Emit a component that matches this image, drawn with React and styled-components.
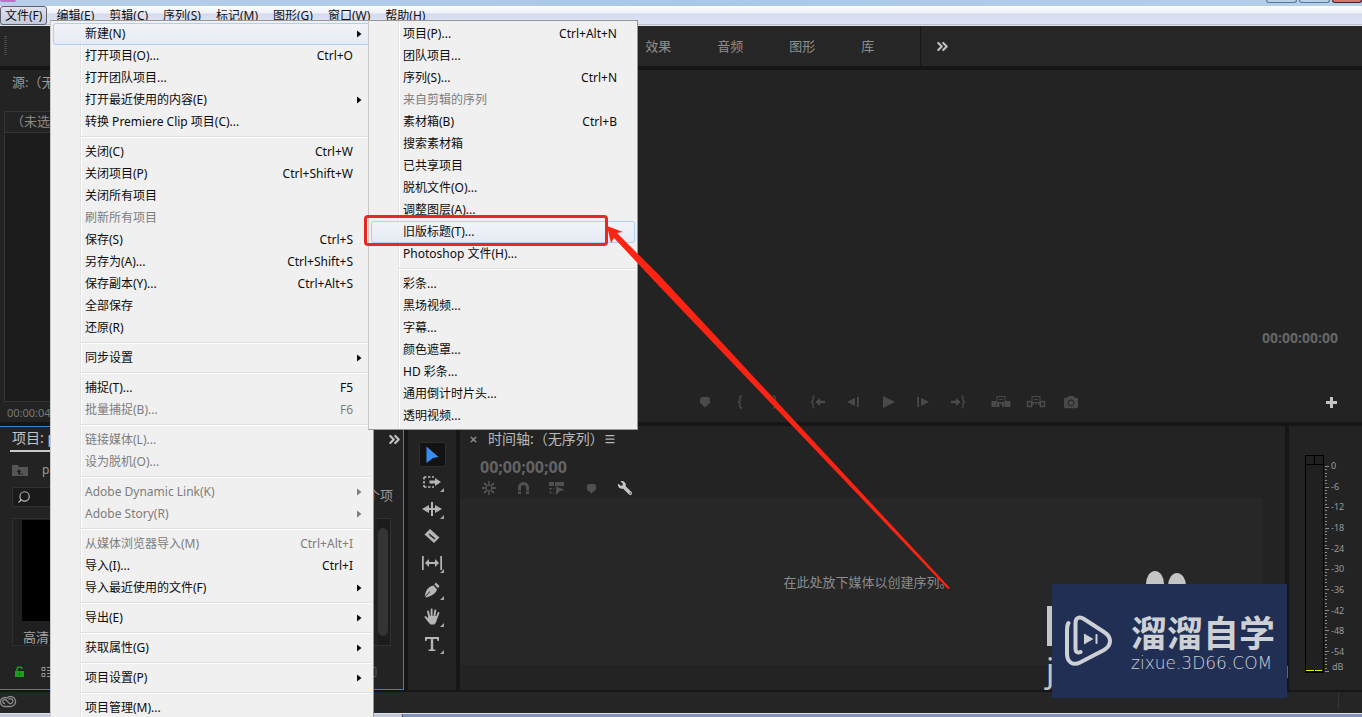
import React from "react";
import styled, { createGlobalStyle, css } from "styled-components";
import { ChevronsRight, Search, Menu as MenuIcon, X } from "lucide-react";
import { FaWrench, FaCamera } from "react-icons/fa";

const GlobalStyle = createGlobalStyle`
  * {
    box-sizing: border-box;
  }
  body {
    margin: 0;
    overflow: hidden;
    background: #161616;
    font-family: "Noto Sans", "Noto Sans CJK SC", sans-serif;
    font-size: 12px;
  }
  button {
    border: 0;
    padding: 0;
    background: none;
    color: inherit;
    font: inherit;
    text-align: left;
  }
`;

const Screen = styled.div`
  position: relative;
  display: flex;
  flex-direction: column;
  height: 100vh;
  overflow: hidden;
`;

/* Window frame */

const TitleBar = styled.header`
  display: flex;
  justify-content: space-between;
  height: 6px;
  flex: none;
  background: linear-gradient(to right, #b7cfe8, #a9c8e8 50%, #b4cfea);
`;

const AppBadge = styled.span`
  width: 16px;
  height: 2px;
  background: #c86ccb;
  border-radius: 0 0 2px 2px;
`;

const WindowButtons = styled.div`
  display: flex;
  gap: 2px;
  height: 3px;
`;

const WindowButton = styled.button`
  width: ${(p) => (p.$close ? 30 : 31)}px;
  border: 1px solid ${(p) => (p.$close ? "#4c1f26" : "#5a7694")};
  border-top: 0;
  border-radius: 0 0 3px 3px;
  background: ${(p) => (p.$close ? "#cf7770" : "#b5cfe8")};
`;

const MenuBar = styled.nav`
  display: flex;
  gap: 1px;
  height: 20px;
  flex: none;
  background: linear-gradient(#fdfdff, #eef1f9 35%, #d5dbee 40%, #dfe4f5 88%, #a9adba 90%, #f4f6fb);
`;

const MenuBarItem = styled.button`
  height: 19px;
  padding: 0 6px;
  border: 1px solid transparent;
  line-height: 17px;
  color: #111;
  white-space: nowrap;

  ${(p) =>
    p.$open &&
    css`
      padding: 0 4px;
      margin-right: 1px;
      border-color: #5c6272;
      border-radius: 3px;
      background: linear-gradient(#dfe2ec, #c4cadb);
    `}
`;

/* Popup menus */

const Popup = styled.div`
  position: absolute;
  left: ${(p) => p.$left}px;
  top: 20px;
  width: ${(p) => p.$width}px;
  padding: 2px 0;
  border: 1px solid #979797;
  border-left-color: #c8c8c8;
  background: linear-gradient(to right, #f0f0f0 29px, #e2e3e3 29px, #e2e3e3 30px, #fff 30px, #fff 31px, #f0f0f0 31px);
`;

const Item = styled.button`
  display: flex;
  align-items: center;
  width: calc(100% - 4px);
  height: 22px;
  margin: 0 2px;
  padding: 0 8px 0 31px;
  border: 1px solid transparent;
  border-radius: 3px;
  color: ${(p) => (p.disabled ? "#7d7d7d" : "#0c0c0c")};
  line-height: 20px;
  white-space: nowrap;

  ${(p) =>
    p.$active &&
    css`
      border-color: #aecff7;
      background: linear-gradient(rgba(241, 244, 249, 0.8), rgba(226, 234, 246, 0.8));
    `}
`;

const ItemLabel = styled.span`
  flex: 1;
`;

const Shortcut = styled.span`
  margin-right: 9px;
`;

const SubArrow = styled.svg`
  width: 5px;
  height: 8px;
  fill: currentColor;
`;

const Separator = styled.hr`
  height: 2px;
  margin: 3px 1px 3px 29px;
  border: 0;
  border-top: 1px solid #e0e0e0;
  background: #fff;
`;

/* Workspace */

const WorkspaceBar = styled.div`
  display: grid;
  grid-template-columns: 9fr 10fr;
  align-items: center;
  height: 40px;
  flex: none;
  margin-bottom: 4px;
  background: #262626;
  color: #8f8f8f;
`;

const Grip = styled.span`
  width: 3px;
  height: 20px;
  margin-left: 4px;
  background: repeating-linear-gradient(#484848 0 1px, transparent 1px 2px);
`;

const WorkspaceTabs = styled.div`
  display: flex;
  align-self: stretch;
  align-items: center;
  gap: 46px;
  font-size: 13px;
  line-height: 18px;
`;

const WorkspaceMore = styled.button`
  display: flex;
  align-items: center;
  align-self: stretch;
  padding-left: 13px;
  border-left: 1px solid #161616;
  color: #c2c2c2;
`;

const Monitors = styled.div`
  display: grid;
  grid-template-columns: 410px 1fr;
  gap: 4px;
  flex: 1;
  min-height: 0;
  margin-bottom: 4px;
`;

const Panel = styled.section`
  display: flex;
  flex-direction: column;
  min-width: 0;
  min-height: 0;
  background: #232323;
  color: #9a9a9a;
`;

const SourceTitle = styled.div`
  flex: none;
  height: 41px;
  padding: 3px 12px;
  font-size: 13px;
  line-height: 18px;
`;

const SourceBox = styled.div`
  flex: 1;
  margin: 0 4px;
  border: 1px solid #353535;
  background: #1c1c1c;
`;

const SourceClip = styled.div`
  height: 21px;
  padding-left: 6px;
  border-bottom: 1px solid #353535;
  background: #232323;
  font-size: 13px;
  line-height: 19px;
  color: #888;
`;

const SourceTime = styled.div`
  height: 20px;
  padding-left: 7px;
  font-size: 11px;
  line-height: 22px;
  color: #777;
`;

const Viewport = styled.div`
  flex: 1;
`;

const ProgramTime = styled.div`
  padding-right: 24px;
  margin-bottom: 34px;
  font: 700 14px/20px "Open Sans", sans-serif;
  text-align: right;
  color: #666;
`;

const Transport = styled.div`
  display: grid;
  grid-template-columns: 1fr auto 1fr;
  align-items: center;
  height: 40px;
  color: #4a4a4a;
`;

const TransportGroups = styled.div`
  display: flex;
  gap: 8px;
  grid-column: 2;
`;

const Group = styled.div`
  display: flex;
`;

const IconButton = styled.button`
  display: flex;
  align-items: center;
  justify-content: center;
  width: ${(p) => p.$width || 35}px;
  height: 24px;
`;

const AddButton = styled.button`
  display: flex;
  justify-self: end;
  margin-right: 25px;
  color: #c4c4c4;
`;

const Lower = styled.div`
  display: grid;
  grid-template-columns: 404px 48px 1fr 73px;
  gap: 4px;
  height: 264px;
  flex: none;
`;

const ProjectPanel = styled(Panel)`
  border: 1px solid #3a80cc;
  border-left: 0;
`;

const ProjectHeader = styled.div`
  display: flex;
  align-items: center;
  justify-content: space-between;
  height: 25px;
  padding: 0 0 0 10px;
  color: #c4c4c4;
`;

const ProjectTab = styled.h2`
  height: 25px;
  margin: 0;
  padding: 0 2px;
  border-bottom: 2px solid #c9c9c9;
  font-size: 14px;
  font-weight: 400;
  line-height: 22px;
`;

const ProjectPath = styled.div`
  display: flex;
  align-items: center;
  gap: 14px;
  height: 35px;
  padding-left: 12px;
`;

const SearchRow = styled.div`
  display: flex;
  align-items: center;
  justify-content: space-between;
  height: 20px;
  padding: 0 10px 0 12px;
  font-size: 13px;
  line-height: 16px;
`;

const SearchBox = styled.label`
  display: flex;
  align-items: center;
  width: 200px;
  height: 20px;
  padding-left: 4px;
  border: 1px solid #303030;
  border-radius: 2px;
  background: #1a1a1a;
  color: #b5b5b5;

  input {
    width: 160px;
    border: 0;
    outline: 0;
    background: none;
    color: inherit;
  }
`;

const ItemCount = styled.span`
  padding-bottom: 4px;
`;

const Bin = styled.div`
  display: flex;
  justify-content: space-between;
  height: 128px;
  margin: 11px 12px 0;
  border: 1px solid #303030;
  background: #202020;
`;

const Clip = styled.figure`
  margin: 1px 9px 0;
  font-size: 13px;
`;

const Thumb = styled.div`
  width: 160px;
  height: 101px;
  background: #000;
`;

const ClipName = styled.figcaption`
  padding: 8px 0 0 1px;
  line-height: 16px;
  color: #a5a5a5;
`;

const ScrollTrack = styled.div`
  width: 12px;
  padding: 9px 0;
  background: #1c1c1c;
`;

const ScrollThumb = styled.div`
  width: 10px;
  height: 108px;
  border-radius: 5px;
  background: #343434;
`;

const ProjectFooter = styled.div`
  display: flex;
  flex: 1;
  align-items: center;
  gap: 16px;
  padding: 8px 26px 0 14px;
`;

const Spacer = styled.span`
  flex: 1;
`;

const Tools = styled(Panel)`
  align-items: center;
  padding-top: 15px;
  color: #b5b5b5;
`;

const Tool = styled.button`
  position: relative;
  display: flex;
  align-items: center;
  justify-content: center;
  width: 27px;
  height: 25px;
  margin: 1px 0;
  border-radius: 2px;
  ${(p) =>
    p.$active &&
    css`
      border: 1px solid #2e2e2e;
      background: #131313;
      color: #3a8df0;
    `}
`;

const ToolCorner = styled.span`
  position: absolute;
  right: 2px;
  bottom: 2px;
  border: 2px solid transparent;
  border-right-color: #a5a5a5;
  border-bottom-color: #a5a5a5;
`;

const TimelineHeader = styled.div`
  display: flex;
  align-items: center;
  height: 26px;
  padding-left: 9px;
  color: #b9b9b9;

  h2 {
    margin: 0;
    padding-left: 10px;
    font-size: 14px;
    font-weight: 400;
    line-height: 20px;
  }
`;

const TimelineTime = styled.div`
  height: 26px;
  padding: 4px 0 0 20px;
  font: 700 16px/22px "Open Sans", sans-serif;
  color: #636363;
`;

const TimelineTools = styled.div`
  display: flex;
  align-items: center;
  height: 20px;
  padding-left: 12px;
  color: #505050;
`;

const DropZone = styled.div`
  display: flex;
  align-items: center;
  justify-content: center;
  height: 167px;
  margin-right: 23px;
  padding-left: 14px;
  background: #272727;
  font-size: 13px;
  color: #8c8c8c;
`;

const MeterPanel = styled(Panel)`
  flex-direction: row;
  padding: 29px 0 0 16px;
`;

const MeterBars = styled.div`
  display: grid;
  grid-template-columns: 1fr 1fr;
  width: 19px;
  height: 218px;
  border: 1px solid #000;
  background: #202020;
`;

const MeterChannel = styled.div`
  display: flex;
  flex-direction: column;
  justify-content: space-between;
  border-bottom: 1px solid #000;
`;

const MeterClip = styled.span`
  height: 9px;
  border-bottom: 1px solid #000;
  border-right: ${(p) => (p.$first ? "1px solid #000" : 0)};
`;

const MeterLevel = styled.span`
  height: 1px;
  margin-right: 1px;
  background: #f0f000;
`;

const MeterScale = styled.ol`
  display: flex;
  flex-direction: column;
  justify-content: space-between;
  height: 198px;
  margin: 5px 0 0;
  padding: 0;
  list-style: none;
  font-size: 9px;
  line-height: 12px;
`;

const MeterUnit = styled.div`
  padding: 2px 0 0 1px;
  font-size: 9px;
  line-height: 14px;
`;

const StatusBar = styled.footer`
  display: flex;
  align-items: center;
  justify-content: space-between;
  height: 21px;
  flex: none;
  margin-top: 2px;
  padding-bottom: 4px;
  background: #252525;
`;

const StatusEnd = styled.span`
  align-self: stretch;
  width: 24px;
  border-left: 1px solid #343434;
`;

const TaskBar = styled.div`
  display: flex;
  height: 4px;
  flex: none;
  border-top: 1px solid #dfe4ee;
  background: #8394b8;
`;

const TaskButton = styled.span`
  width: 403px;
  border-right: 1px solid #3c4454;
  border-radius: 0 2px 0 0;
  background: #c3cbd9;
`;

/* Things drawn on top of the window */

const HighlightBox = styled.div`
  position: absolute;
  left: 364px;
  top: 215px;
  width: 244px;
  height: 31px;
  border: 3px solid #e62a20;
  border-radius: 4px;
`;

const ArrowLayer = styled.svg`
  position: absolute;
  left: 600px;
  top: 220px;
  pointer-events: none;
`;

const PawLayer = styled.div`
  position: absolute;
  right: 74px;
  bottom: 19px;
  width: 244px;
  height: 127px;
  color: #c5c5c5;
`;

const PawShapes = styled.svg`
  display: block;
`;

const PawLetter = styled.span`
  position: absolute;
  left: 2px;
  bottom: 8px;
  font: 32px/40px "Noto Sans", sans-serif;
`;

const Watermark = styled.div`
  position: absolute;
  right: 75px;
  bottom: 19px;
  display: flex;
  align-items: center;
  gap: 18px;
  width: 235px;
  height: 114px;
  padding-left: 13px;
  background: #222f54;
  color: #cdd0d4;
`;

const BrandName = styled.div`
  font: 700 36px/44px "Noto Sans CJK SC", sans-serif;
  white-space: nowrap;
`;

const BrandSite = styled.div`
  font: 200 17px/20px "DejaVu Sans", sans-serif;
  white-space: nowrap;
`;

const menuBar = ["文件(F)", "编辑(E)", "剪辑(C)", "序列(S)", "标记(M)", "图形(G)", "窗口(W)", "帮助(H)"];

const fileMenu = [
  { label: "新建(N)", sub: true, active: true },
  { label: "打开项目(O)...", keys: "Ctrl+O" },
  { label: "打开团队项目..." },
  { label: "打开最近使用的内容(E)", sub: true },
  { label: "转换 Premiere Clip 项目(C)..." },
  null,
  { label: "关闭(C)", keys: "Ctrl+W" },
  { label: "关闭项目(P)", keys: "Ctrl+Shift+W" },
  { label: "关闭所有项目" },
  { label: "刷新所有项目", disabled: true },
  { label: "保存(S)", keys: "Ctrl+S" },
  { label: "另存为(A)...", keys: "Ctrl+Shift+S" },
  { label: "保存副本(Y)...", keys: "Ctrl+Alt+S" },
  { label: "全部保存" },
  { label: "还原(R)" },
  null,
  { label: "同步设置", sub: true },
  null,
  { label: "捕捉(T)...", keys: "F5" },
  { label: "批量捕捉(B)...", keys: "F6", disabled: true },
  null,
  { label: "链接媒体(L)...", disabled: true },
  { label: "设为脱机(O)...", disabled: true },
  null,
  { label: "Adobe Dynamic Link(K)", sub: true, disabled: true },
  { label: "Adobe Story(R)", sub: true, disabled: true },
  null,
  { label: "从媒体浏览器导入(M)", keys: "Ctrl+Alt+I", disabled: true },
  { label: "导入(I)...", keys: "Ctrl+I" },
  { label: "导入最近使用的文件(F)", sub: true },
  null,
  { label: "导出(E)", sub: true },
  null,
  { label: "获取属性(G)", sub: true },
  null,
  { label: "项目设置(P)", sub: true },
  null,
  { label: "项目管理(M)..." },
];

const newMenu = [
  { label: "项目(P)...", keys: "Ctrl+Alt+N" },
  { label: "团队项目..." },
  { label: "序列(S)...", keys: "Ctrl+N" },
  { label: "来自剪辑的序列", disabled: true },
  { label: "素材箱(B)", keys: "Ctrl+B" },
  { label: "搜索素材箱" },
  { label: "已共享项目" },
  { label: "脱机文件(O)..." },
  { label: "调整图层(A)..." },
  { label: "旧版标题(T)...", active: true },
  { label: "Photoshop 文件(H)..." },
  null,
  { label: "彩条..." },
  { label: "黑场视频..." },
  { label: "字幕..." },
  { label: "颜色遮罩..." },
  { label: "HD 彩条..." },
  { label: "通用倒计时片头..." },
  { label: "透明视频..." },
];

const workspaces = ["效果", "音频", "图形", "库"];

const meterMarks = ["0", "-6", "-12", "-18", "-24", "-30", "-36", "-42", "-48", "-54"];

const MenuList = ({ items, left, width }) => (
  <Popup role="menu" $left={left} $width={width}>
    {items.map((item, i) =>
      item ? (
        <Item key={i} role="menuitem" $active={item.active} disabled={item.disabled}>
          <ItemLabel>{item.label}</ItemLabel>
          {item.keys && <Shortcut>{item.keys}</Shortcut>}
          {item.sub && (
            <SubArrow viewBox="0 0 5 8">
              <path d="M0 0.5 4.5 4 0 7.5z" />
            </SubArrow>
          )}
        </Item>
      ) : (
        <Separator key={i} />
      )
    )}
  </Popup>
);

const Icon = ({ w = 18, h = 18, children, ...rest }) => (
  <svg width={w} height={h} viewBox={`0 0 ${w} ${h}`} fill="currentColor" aria-hidden="true" {...rest}>
    {children}
  </svg>
);

const Marker = ({ size = 12 }) => (
  <svg width={size} height={size} viewBox="0 0 12 12" fill="currentColor">
    <path d="M1 2.5 2.5 1h7L11 2.5V7L6 11.5 1 7z" />
  </svg>
);

const Brace = ({ flip }) => (
  <Icon w={6} h={14}>
    <path
      d="M5 1H4.2Q3 1 3 2.5v3L1.5 7 3 8.5v3Q3 13 4.2 13H5"
      fill="none"
      stroke="currentColor"
      strokeWidth="1.5"
      transform={flip ? "translate(6 0) scale(-1 1)" : undefined}
    />
  </Icon>
);

const GoTo = ({ flip }) => (
  <Icon w={16} h={14}>
    <g transform={flip ? "translate(16 0) scale(-1 1)" : undefined}>
      <path d="M4.5 1Q3 1 3 2.5v3L1.5 7 3 8.5v3Q3 13 4.5 13" fill="none" stroke="currentColor" strokeWidth="1.3" />
      <path d="M5.5 7l4.500-4v2.700h5v2.600h-5V11z" />
    </g>
  </Icon>
);

const Step = ({ flip }) => (
  <Icon w={14} h={12}>
    <g transform={flip ? "translate(14 0) scale(-1 1)" : undefined}>
      <path d="M1 6 9 2v8zM11 1h1.700v10H11z" />
    </g>
  </Icon>
);

const Lift = ({ hollow }) => (
  <Icon w={20} h={14}>
    <path d="M6 1.500h8v6H6z" fill="none" stroke="currentColor" />
    <path d="M8 4h4v1H8zM9.500 7.500h1V10h-1z" />
    {hollow ? (
      <path d="M1.500 6.500h4v5h-4zM14.500 6.500h4v5h-4zM6 9h2M12 9h2" fill="none" stroke="currentColor" strokeWidth="1.500" />
    ) : (
      <path d="M.5 6h5v6h-5zM14 6h5.500v6H14zM6 8h2.500v4H6zM11 8h2.500v4H11z" />
    )}
  </Icon>
);

const ToolIcons = [
  <Icon w={14} h={18} key="select">
    <path d="M1.500 0.500 13.500 11 8 12 1.500 17z" />
  </Icon>,
  <Icon w={18} h={14} key="track">
    <path d="M1 2h10M1 12h10M1 2v10" fill="none" stroke="currentColor" strokeWidth="1.600" strokeDasharray="2.500 1.500" />
    <path d="M6.500 5.500H12V3l6 4-6 4V8.500H6.500z" />
  </Icon>,
  <Icon w={20} h={14} key="ripple">
    <path d="M9 0h2v14H9zM0 7l7-4v3h6V3l7 4-7 4V8H7v3z" />
  </Icon>,
  <Icon w={16} h={16} key="razor">
    <path d="M6 1 15.500 9.500 10 15 .5 6.500z" />
    <path d="M5 6l6 5M6.500 8.500l1-1M8.500 10l1-1" stroke="#232323" strokeWidth="1.300" />
  </Icon>,
  <Icon w={20} h={16} key="slip">
    <path d="M0 1h1.700v14H0zM18.300 1H20v14h-1.700zM3 8l4-4v3h6V4l4 4-4 4V9H7v3z" />
  </Icon>,
  <Icon w={16} h={16} key="pen">
    <path d="M9.500 3.500l3.500 4c-1 3.500-4 6-11 8l-.7-.5 5-5.200-.5-.6-5 5.200C1.500 9 4 4.500 9.500 3.500zM10.500 2.500 12 .5 15.500 4 14 6.200z" />
  </Icon>,
  <Icon w={16} h={18} key="hand">
    <path d="M5.300 9 4 3.500M7.600 8V1.500M10.300 8.500l1-6M12.500 10l2-5M5 13.500 1.500 9" fill="none" stroke="currentColor" strokeWidth="1.900" strokeLinecap="round" />
    <path d="M4.500 8h8.700c0 4-.7 6-2.700 8.500H6.500C5 15 3.500 13 3 11z" />
  </Icon>,
  <Icon w={16} h={16} key="type">
    <path d="M1 1h14v4h-1.500L13 3H9.200v10.300l2.300.5V15h-7v-1.200l2.300-.5V3H3l-.5 2H1z" />
  </Icon>,
];

const toolNames = ["选择", "向前选择轨道", "波纹编辑", "剃刀", "外滑", "钢笔", "手形", "文字"];

const SourceMonitor = () => (
  <Panel>
    <SourceTitle>源:（无</SourceTitle>
    <SourceBox>
      <SourceClip>（未选</SourceClip>
    </SourceBox>
    <SourceTime>00:00:04</SourceTime>
  </Panel>
);

const ProgramMonitor = () => (
  <Panel>
    <Viewport />
    <ProgramTime>00:00:00:00</ProgramTime>
    <Transport>
      <TransportGroups>
        <Group>
          <IconButton aria-label="添加标记"><Marker /></IconButton>
          <IconButton aria-label="标记入点"><Brace /></IconButton>
          <IconButton aria-label="标记出点"><Brace flip /></IconButton>
        </Group>
        <Group>
          <IconButton aria-label="转到入点"><GoTo /></IconButton>
          <IconButton aria-label="后退一帧"><Step /></IconButton>
          <IconButton aria-label="播放">
            <Icon w={13} h={14}><path d="M1 1 13 7 1 13z" /></Icon>
          </IconButton>
          <IconButton aria-label="前进一帧"><Step flip /></IconButton>
          <IconButton aria-label="转到出点"><GoTo flip /></IconButton>
        </Group>
        <Group>
          <IconButton aria-label="提升"><Lift /></IconButton>
          <IconButton aria-label="提取"><Lift hollow /></IconButton>
          <IconButton aria-label="导出帧"><FaCamera size={14} /></IconButton>
        </Group>
      </TransportGroups>
      <AddButton aria-label="按钮编辑器">
        <Icon w={11} h={11}><path d="M4 0h3v4h4v3H7v4H4V7H0V4h4z" /></Icon>
      </AddButton>
    </Transport>
  </Panel>
);

const Project = () => (
  <ProjectPanel>
    <ProjectHeader>
      <ProjectTab>项目: ps</ProjectTab>
      <ChevronsRight size={17} strokeWidth={3} />
    </ProjectHeader>
    <ProjectPath>
      <Icon w={16} h={12}>
        <path d="M0 1h6l1 2h9v9H0z" fill="#555" />
        <path d="M7 5 4.500 8H6v2.500h5V9.500H8V8h1.500z" fill="#232323" />
      </Icon>
      ps
    </ProjectPath>
    <SearchRow>
      <SearchBox>
        <Search size={14} transform="scale(-1 1)" />
        <input aria-label="搜索" />
      </SearchBox>
      <ItemCount>个项</ItemCount>
    </SearchRow>
    <Bin>
      <Clip>
        <Thumb />
        <ClipName>高清</ClipName>
      </Clip>
      <ScrollTrack>
        <ScrollThumb />
      </ScrollTrack>
    </Bin>
    <ProjectFooter>
      <Icon w={11} h={12}>
        <path d="M1 5h9v6H1z" fill="#18a018" />
        <path d="M3 5V3.500Q3 1 5.500 1T8 3" fill="none" stroke="#18a018" strokeWidth="1.500" />
        <path d="M5 7h1v2H5z" fill="#123512" />
      </Icon>
      <Icon w={14} h={12}>
        <path d="M1 1.500h3v3H1zM1 7.500h3v3H1z" fill="none" stroke="currentColor" />
        <path d="M6 1h8v1H6zM6 4h8v1H6zM6 7h8v1H6zM6 10h8v1H6z" />
      </Icon>
      <Spacer />
      <Icon w={10} h={12}><path d="M1 1.500h8v9H1z" fill="none" stroke="#555" /></Icon>
    </ProjectFooter>
  </ProjectPanel>
);

const Timeline = () => (
  <Panel>
    <TimelineHeader>
      <X size={9} strokeWidth={4} color="#8a8a8a" />
      <h2>时间轴:（无序列）</h2>
      <MenuIcon size={12} strokeWidth={2.5} />
    </TimelineHeader>
    <TimelineTime>00;00;00;00</TimelineTime>
    <TimelineTools>
      <IconButton $width={34} aria-label="嵌套">
        <Icon w={16} h={14}>
          <path d="M8 0v5M8 9v5M1 7h5M10 7h5M3 2l3.500 3.500M13 2 9.500 5.500M3 12l3.500-3.500M9.500 8.500 13 12" stroke="currentColor" strokeWidth="1.800" />
        </Icon>
      </IconButton>
      <IconButton $width={34} aria-label="对齐">
        <Icon w={13} h={12}>
          <path d="M2.500 12V5.500a4 4 0 0 1 8 0V12" fill="none" stroke="currentColor" strokeWidth="3" />
          <path d="M0 9h5M8 9h5" stroke="#232323" />
        </Icon>
      </IconButton>
      <IconButton $width={34} aria-label="链接选择项">
        <Icon w={16} h={14}>
          <path d="M0 1h5v4H0zM6 1h9v4H6zM6 5l10 4-5 1-4 4V5z" />
          <path d="M1 7.500h4M1 12h4M1 7v5" fill="none" stroke="currentColor" strokeDasharray="2 1" />
        </Icon>
      </IconButton>
      <IconButton $width={34} aria-label="标记"><Marker size={11} /></IconButton>
      <IconButton $width={34} aria-label="设置">
        <FaWrench size={14} color="#c4c4c4" transform="scale(-1 1)" />
      </IconButton>
    </TimelineTools>
    <DropZone>在此处放下媒体以创建序列。</DropZone>
  </Panel>
);

const Meters = () => (
  <MeterPanel>
    <MeterBars>
      {[0, 1].map((n) => (
        <MeterChannel key={n}>
          <MeterClip $first={n === 0} />
          <MeterLevel />
        </MeterChannel>
      ))}
    </MeterBars>
    <Icon w={7} h={218}>
      {Array.from({ length: 61 }, (_, i) => (
        <rect key={i} x="1" y={Math.round(11 + i * 3.42)} width={i % 6 ? 2 : 4} height="1" fill="#8a8a8a" />
      ))}
    </Icon>
    <div>
      <MeterScale>
        {meterMarks.map((mark) => (
          <li key={mark}>{mark}</li>
        ))}
      </MeterScale>
      <MeterUnit>dB</MeterUnit>
    </div>
  </MeterPanel>
);

const Brand = () => (
  <>
    <PawLayer>
      <PawShapes width="244" height="127" viewBox="0 0 244 127" fill="#c5c5c5">
        <ellipse cx="111" cy="13" rx="9" ry="13" />
        <ellipse cx="133" cy="15" rx="9" ry="13" />
        <path d="M3 35h6v40H3z" />
        <path d="M243 95h1v12h-1z" fill="#666" />
      </PawShapes>
      <PawLetter>j</PawLetter>
    </PawLayer>
    <Watermark>
      <svg width="48" height="52" viewBox="0 0 48 52" fill="none" stroke="#cdd0d4" strokeLinecap="round">
        <path d="M3.500 8C2 10 2 12 2 15v24c0 8 6 12 13 8.500L39 35c8-5 8-13 0-18L19 4c-5-3-8.500-1-8.500 4v26c0 3 2 4.500 5 3" strokeWidth="4" />
        <path d="M19 18.500 28.500 24 19 29.500z" fill="#cdd0d4" stroke="none" />
        <path d="M31.500 20v8" strokeWidth="2" />
      </svg>
      <div>
        <BrandName>溜溜自学</BrandName>
        <BrandSite>zixue.3D66.COM</BrandSite>
      </div>
    </Watermark>
  </>
);

const App = () => {
  return (
    <Screen>
      <GlobalStyle />
      <TitleBar>
        <AppBadge />
        <WindowButtons>
          <WindowButton aria-label="最小化" />
          <WindowButton aria-label="最大化" />
          <WindowButton aria-label="关闭" $close />
        </WindowButtons>
      </TitleBar>
      <MenuBar>
        {menuBar.map((name, i) => (
          <MenuBarItem key={name} $open={i === 0}>
            {name}
          </MenuBarItem>
        ))}
      </MenuBar>
      <WorkspaceBar>
        <Grip />
        <WorkspaceTabs>
          {workspaces.map((name) => (
            <button key={name}>{name}</button>
          ))}
          <WorkspaceMore aria-label="更多">
            <ChevronsRight size={17} strokeWidth={3} />
          </WorkspaceMore>
        </WorkspaceTabs>
      </WorkspaceBar>
      <Monitors>
        <SourceMonitor />
        <ProgramMonitor />
      </Monitors>
      <Lower>
        <Project />
        <Tools>
          {ToolIcons.map((icon, i) => (
            <Tool key={toolNames[i]} $active={i === 0} aria-label={toolNames[i]}>
              {icon}
              {i !== 0 && i !== 3 && <ToolCorner />}
            </Tool>
          ))}
        </Tools>
        <Timeline />
        <Meters />
      </Lower>
      <StatusBar>
        <Icon w={17} h={14}>
          <path
            d="M5 12.500a4.500 4.500 0 1 1 2-8.500 5 5 0 1 1 3 8.500zM5 9.500a2 2 0 1 1 1.500-3l3 3a2.500 2.500 0 1 0-1-4"
            fill="none"
            stroke="#8a8a8a"
            strokeWidth="1.300"
          />
        </Icon>
        <StatusEnd />
      </StatusBar>
      <TaskBar>
        <TaskButton />
      </TaskBar>
      <Brand />
      <MenuList items={fileMenu} left={50} width={324} />
      <MenuList items={newMenu} left={368} width={270} />
      <HighlightBox />
      <ArrowLayer width="352" height="370" viewBox="0 0 352 370">
        <path d="M7 6 23 12 17 13 60 56 350 368 348 369 60 67 14 18 11 23z" fill="#fb2414" />
      </ArrowLayer>
    </Screen>
  );
};

export default App;
